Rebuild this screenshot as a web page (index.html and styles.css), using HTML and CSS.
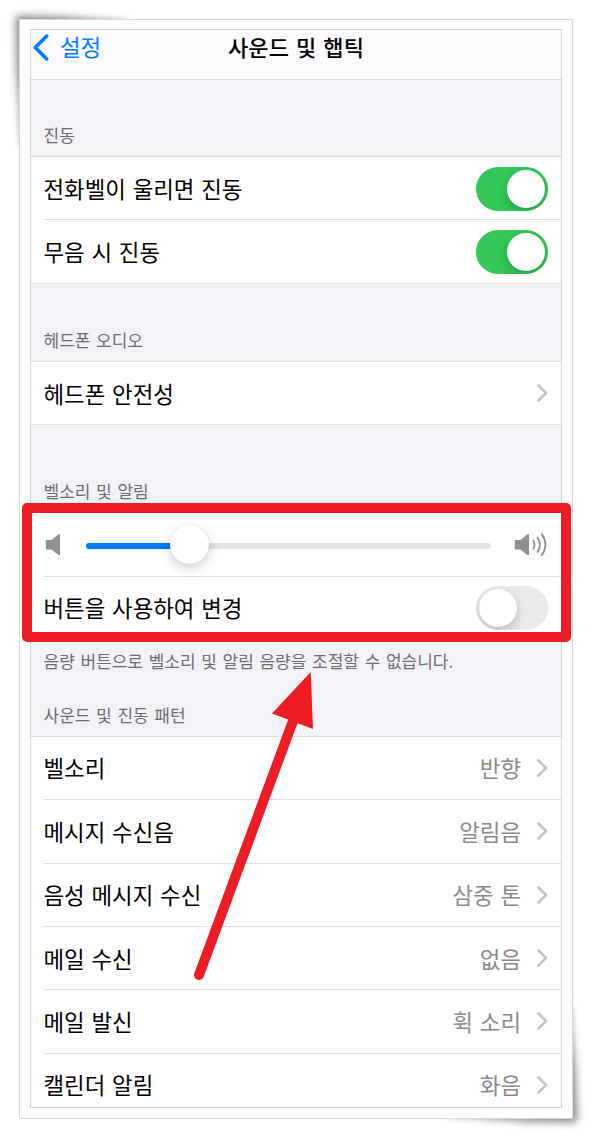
FILE: index.html
```
<!DOCTYPE html>
<html lang="ko">

<head>
    <meta charset="utf-8">
    <meta name="viewport" content="width=device-width">
    <title>사운드 및 햅틱</title>
    <link rel="stylesheet" href="styles.css">
</head>

<body>
    <svg class="curl" width="592" height="1138" viewBox="0 0 592 1138">
        <path d="M16 16L60 17L130 23L60 60L23 150L17 70Z" />
        <path d="M577 1122L525 1121L445 1114L530 1080L568 1000L575 1070Z" />
    </svg>
    <div class="frame">
        <div class="screen">
            <header class="nav">
                <a class="back">
                    <svg width="16" height="27" viewBox="0 0 16 27">
                        <path d="M13.7 2L2.3 13.5L13.7 25" />
                    </svg>
                    <span>설정</span>
                </a>
                <h1>사운드 및 햅틱</h1>
            </header>

            <h2 class="group-title">진동</h2>
            <ul class="list">
                <li class="row">
                    <div class="cell"><span>전화벨이 울리면 진동</span><i class="switch on"></i></div>
                </li>
                <li class="row">
                    <div class="cell"><span>무음 시 진동</span><i class="switch on"></i></div>
                </li>
            </ul>

            <h2 class="group-title headphone">헤드폰 오디오</h2>
            <ul class="list">
                <li class="row">
                    <div class="cell"><span>헤드폰 안전성</span><svg class="chevron" viewBox="0 0 11 18"><path d="M1.5 1.5L9 9L1.5 16.5" /></svg></div>
                </li>
            </ul>

            <h2 class="group-title ringer">벨소리 및 알림</h2>
            <ul class="list">
                <li class="row">
                    <div class="cell volume">
                        <svg class="speaker" width="16" height="24" viewBox="0 0 16 24">
                            <path d="M2 7H6.5L12.8 1.7Q15 .2 15 2.5V21Q15 23.3 12.8 21.6L6.5 16.5H2Q.8 16.5 .8 15.3V8.2Q.8 7 2 7Z" />
                        </svg>
                        <div class="track">
                            <div class="fill"></div>
                            <div class="knob"></div>
                        </div>
                        <svg class="speaker" width="34" height="24" viewBox="0 0 34 24">
                            <path d="M2 7H6.5L12.8 1.7Q15 .2 15 2.5V21Q15 23.3 12.8 21.6L6.5 16.5H2Q.8 16.5 .8 15.3V8.2Q.8 7 2 7Z" />
                            <path class="wave" d="M19.3 7.7Q21.7 11.7 19.3 15.7M23.5 4.5Q28.3 11.7 23.5 18.9M27.8 1.3Q35.2 11.7 27.8 22.1" />
                        </svg>
                    </div>
                </li>
                <li class="row">
                    <div class="cell"><span>버튼을 사용하여 변경</span><i class="switch"></i></div>
                </li>
            </ul>

            <div class="group-note">
                <p>음량 버튼으로 벨소리 및 알림 음량을 조절할 수 없습니다.</p>
                <h2 class="group-title pattern">사운드 및 진동 패턴</h2>
            </div>
            <ul class="list">
                <li class="row">
                    <div class="cell"><span>벨소리</span><span class="value">반향</span><svg class="chevron" viewBox="0 0 11 18"><path d="M1.5 1.5L9 9L1.5 16.5" /></svg></div>
                </li>
                <li class="row">
                    <div class="cell"><span>메시지 수신음</span><span class="value">알림음</span><svg class="chevron" viewBox="0 0 11 18"><path d="M1.5 1.5L9 9L1.5 16.5" /></svg></div>
                </li>
                <li class="row">
                    <div class="cell"><span>음성 메시지 수신</span><span class="value">삼중 톤</span><svg class="chevron" viewBox="0 0 11 18"><path d="M1.5 1.5L9 9L1.5 16.5" /></svg></div>
                </li>
                <li class="row">
                    <div class="cell"><span>메일 수신</span><span class="value">없음</span><svg class="chevron" viewBox="0 0 11 18"><path d="M1.5 1.5L9 9L1.5 16.5" /></svg></div>
                </li>
                <li class="row">
                    <div class="cell"><span>메일 발신</span><span class="value">휙 소리</span><svg class="chevron" viewBox="0 0 11 18"><path d="M1.5 1.5L9 9L1.5 16.5" /></svg></div>
                </li>
                <li class="row">
                    <div class="cell"><span>캘린더 알림</span><span class="value">화음</span><svg class="chevron" viewBox="0 0 11 18"><path d="M1.5 1.5L9 9L1.5 16.5" /></svg></div>
                </li>
            </ul>
        </div>
    </div>

    <!-- red box and arrow over the ringer settings -->
    <svg class="marks" width="592" height="1138" viewBox="0 0 592 1138">
        <rect x="27" y="508" width="539" height="129" />
        <path class="shaft" d="M199 975L293 721" />
        <path class="head" d="M310.7 672L313 729L272 713.5Z" />
    </svg>
</body>

</html>
```
FILE: styles.css
```
* {
    margin: 0;
    padding: 0;
    box-sizing: border-box;
}

body {
    position: relative;
    height: 1138px;
    padding: 19px 0 0 19px;
    overflow: hidden;
    background: #fff;
    color: #000;
    font-family: "Noto Sans CJK KR", sans-serif;
}

.curl,
.marks {
    position: absolute;
    top: 0;
    left: 0;
}

.curl path {
    fill: rgba(0, 0, 0, .5);
    filter: blur(4px);
}

.frame {
    position: relative;
    width: 554px;
    height: 1100px;
    padding: 9px 10px 10px;
    border: 1px solid #d9d9d9;
    background: #fff;
}

.screen {
    height: 1079px;
    overflow: hidden;
    border: 1px solid #d4d4d6;
    background: #f2f2f7;
}

.nav {
    display: grid;
    grid-template-columns: 1fr auto 1fr;
    height: 50px;
    padding-top: 4px;
    border-bottom: 1px solid #d8d8db;
    background: #fbfbfd;
    line-height: 24px;
}

.nav h1 {
    font-size: 22px;
    font-weight: 500;
    letter-spacing: .2px;
    word-spacing: .4px;
}

.back {
    display: flex;
    gap: 11px;
    padding-left: 2px;
    color: #007aff;
    font-size: 22.4px;
}

.back path {
    fill: none;
    stroke: #007aff;
    stroke-width: 3.5;
    stroke-linecap: round;
    stroke-linejoin: round;
}

.group-title {
    display: flex;
    align-items: flex-end;
    height: 77px;
    padding: 0 12.5px 11px;
    border-bottom: 1px solid #dededf;
    color: #6d6d72;
    font-size: 17px;
    font-weight: 400;
    line-height: 20px;
    word-spacing: .9px;
}

.headphone {
    height: 78.2px;
}

.ringer {
    height: 88px;
}

.group-note {
    height: 96.6px;
    padding-top: 11px;
    color: #6d6d72;
}

.group-note p {
    padding-left: 12.5px;
    font-size: 17px;
    line-height: 20px;
    word-spacing: .9px;
    white-space: nowrap;
}

.pattern {
    height: 65.6px;
}

.list {
    list-style: none;
    background: #fff;
}

.row {
    height: 63.4px;
    padding-left: 12px;
    font-size: 22.4px;
    line-height: 32px;
    word-spacing: .5px;
}

.cell {
    display: flex;
    align-items: center;
    justify-content: space-between;
    height: 100%;
    padding-right: 13px;
    border-bottom: 1px solid #e0e0e2;
}

.cell span {
    padding: 0 0 1px .5px;
}

.row:last-child {
    padding-left: 0;
}

.row:last-child .cell {
    padding-left: 12px;
}

.cell .value {
    margin: 0 16px 0 auto;
    color: #8a8a8e;
}

.chevron {
    width: 11px;
    height: 18px;
}

.chevron path {
    fill: none;
    stroke: #c4c4c6;
    stroke-width: 2.6;
    stroke-linecap: round;
    stroke-linejoin: round;
}

.switch {
    width: 72px;
    height: 44px;
    margin-top: 1px;
    padding: 3px;
    border-radius: 22px;
    background: #e9e9ea;
    overflow: hidden;
}

.switch::after {
    content: "";
    display: block;
    width: 38px;
    height: 38px;
    border-radius: 50%;
    background: #fff;
    box-shadow: 0 4px 10px rgba(0, 0, 0, .2);
}

.switch.on {
    background: #34c759;
}

.switch.on::after {
    margin-left: 28px;
}

.volume {
    padding: 0 13.5px 0 2px;
}

.row .volume {
    padding-left: 2px;
}

.speaker {
    fill: #8e8e93;
}

.speaker .wave {
    fill: none;
    stroke: #8e8e93;
    stroke-width: 1.8;
    stroke-linecap: round;
}

.track {
    position: relative;
    width: 405px;
    height: 6px;
    margin: 2px 0 0 1.5px;
    border-radius: 3px;
    background: #e4e4e6;
}

.fill {
    width: 103px;
    height: 6px;
    border-radius: 3px;
    background: #007aff;
}

.knob {
    position: absolute;
    top: -18px;
    left: 84px;
    width: 39px;
    height: 39px;
    border-radius: 50%;
    background: #fff;
    box-shadow: 0 4px 12px rgba(0, 0, 0, .2), 0 0 1px rgba(0, 0, 0, .15);
}

.marks rect {
    fill: none;
    stroke: #ee1c25;
    stroke-width: 10;
    stroke-linejoin: round;
}

.shaft {
    stroke: #ee1c25;
    stroke-width: 10;
    stroke-linecap: round;
}

.head {
    fill: #ee1c25;
}
```
